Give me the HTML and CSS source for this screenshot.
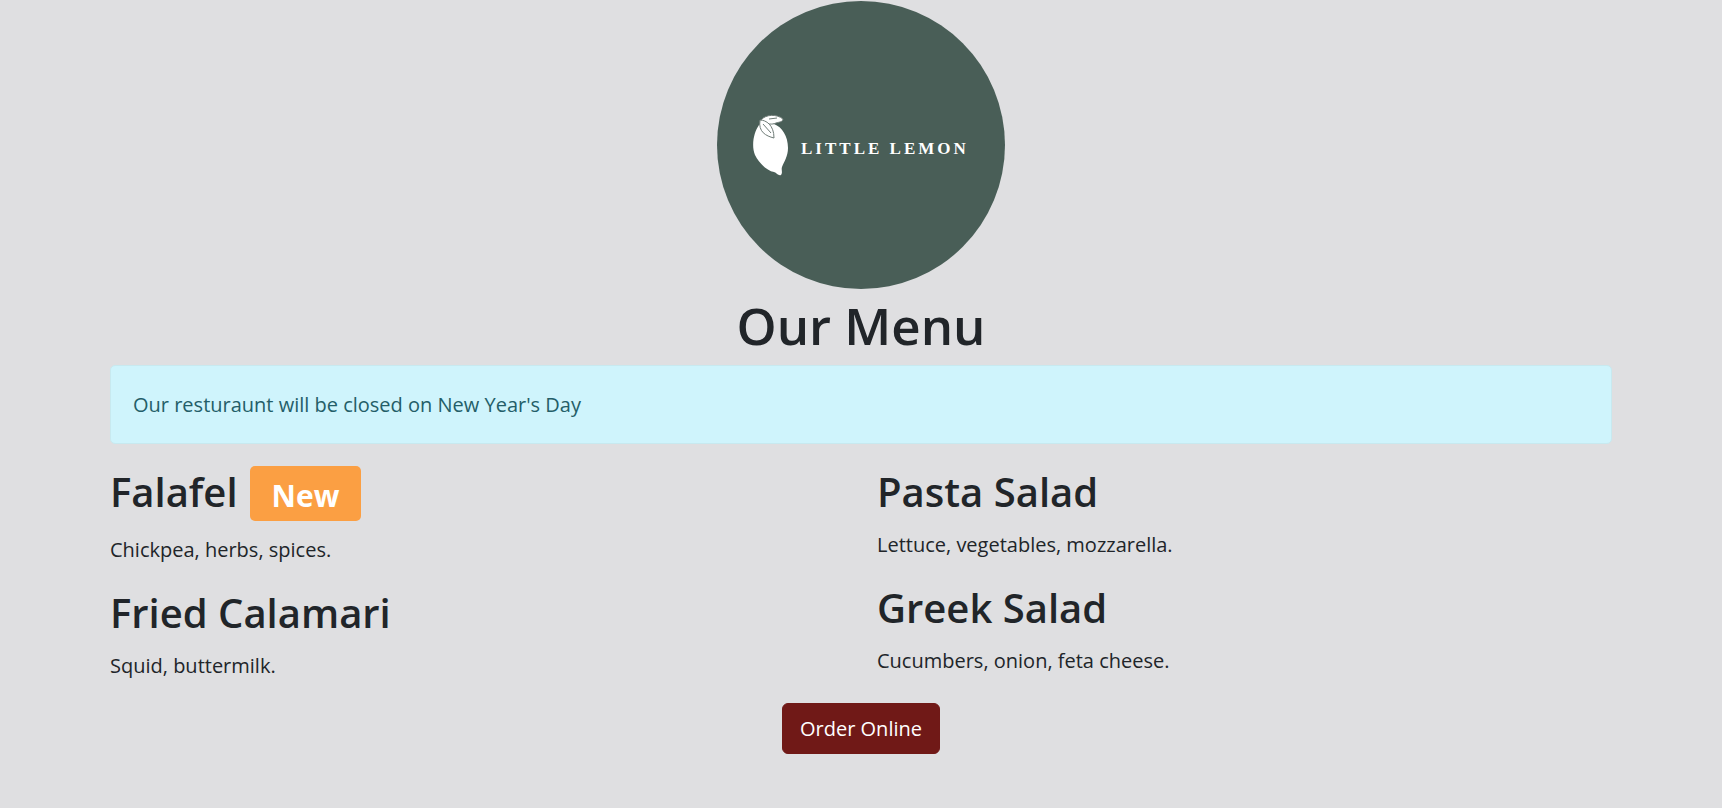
FILE: index.html
```html
<!DOCTYPE html>
<html lang="en">
<head>
  <meta charset="utf-8">
  <meta name="viewport" content="width=device-width, initial-scale=1">
  <title>Little Lemon</title>
  <link rel="stylesheet" href="styles.css">
</head>
<body>
  <div class="container">
    <header class="header">
      <svg class="logo" viewBox="0 0 288 288" role="img" aria-label="Little Lemon">
        <circle cx="144" cy="144" r="144" fill="#495e57"/>
        <path fill="#fff" d="M42 124 C46 120 52 121 57 123 C65 126 71 135 71 147 C71 155 67 161 65 166 C64 169 66 171 64 174 C61 175 60 172 57 171 C50 170 42 162 38 154 C34 144 37 131 42 124Z"/>
        <path class="leaf" d="M44 119 C49 113 60 113 66 118 C66 121 62 121 59 122 C55 124 50 123 46 121Z"/>
        <path class="leaf" d="M43 119 C49 119 57 124 57 137 C49 135 41 131 43 119Z"/>
        <path class="vein" d="M46 123 L54 132 M52 118 L60 117"/>
        <text class="wordmark" x="84" y="153">LITTLE LEMON</text>
      </svg>
      <h1 class="title">Our Menu</h1>
    </header>
    <main>
      <div class="alert" role="alert">Our resturaunt will be closed on New Year's Day</div>
      <div class="menu">
        <section class="column">
          <h2 class="dish">Falafel <span class="badge">New</span></h2>
          <p class="details">Chickpea, herbs, spices.</p>
          <h2 class="dish">Fried Calamari</h2>
          <p class="details">Squid, buttermilk.</p>
        </section>
        <section class="column">
          <h2 class="dish">Pasta Salad</h2>
          <p class="details">Lettuce, vegetables, mozzarella.</p>
          <h2 class="dish">Greek Salad</h2>
          <p class="details">Cucumbers, onion, feta cheese.</p>
        </section>
      </div>
      <div class="actions">
        <button class="order" type="button">Order Online</button>
      </div>
    </main>
  </div>
</body>
</html>
```
FILE: styles.css
```css
* {
  box-sizing: border-box;
}

body {
  margin: 0;
  background: #dfdfe1;
  color: #212529;
  font-family: "Open Sans", "Noto Sans", sans-serif;
  font-size: 20px;
  line-height: 33px;
}

.container {
  max-width: 1534px;
  margin: 0 auto;
  padding: 1px 16px 0;
}

.header {
  text-align: center;
}

.logo {
  display: block;
  width: 288px;
  margin: 0 auto;
}

.leaf {
  fill: #fff;
  stroke: #6f7c77;
  stroke-width: 1;
}

.vein {
  fill: none;
  stroke: #6f7c77;
  stroke-width: 1;
}

.wordmark {
  fill: #fff;
  font-family: "Liberation Serif", serif;
  font-size: 17px;
  font-weight: 700;
  letter-spacing: 3px;
}

.title {
  margin: 4px 0 8px;
  font-size: 51px;
  font-weight: 600;
  line-height: 64px;
}

.alert {
  margin-bottom: 22px;
  padding: 22px;
  border: 1px solid #c8e9ef;
  border-radius: 5px;
  background: #cff4fc;
  color: #245e68;
}

.menu {
  display: grid;
  grid-template-columns: 1fr 1fr;
  gap: 32px;
}

.dish {
  display: flex;
  align-items: baseline;
  gap: 12px;
  margin: 0 0 10px;
  font-size: 40px;
  font-weight: 600;
  line-height: 52px;
}

.badge {
  margin-bottom: 2px;
  padding: 13px 22px 9px;
  border-radius: 5px;
  background: #fb9f43;
  color: #fff;
  font-size: 30px;
  font-weight: 700;
  line-height: 33px;
}

.details {
  margin: 0 0 21px;
}

.actions {
  text-align: center;
}

.order {
  padding: 8px 17px;
  border: 1px solid #701917;
  border-radius: 6px;
  background: #701917;
  color: #fff;
  font: inherit;
}
```
